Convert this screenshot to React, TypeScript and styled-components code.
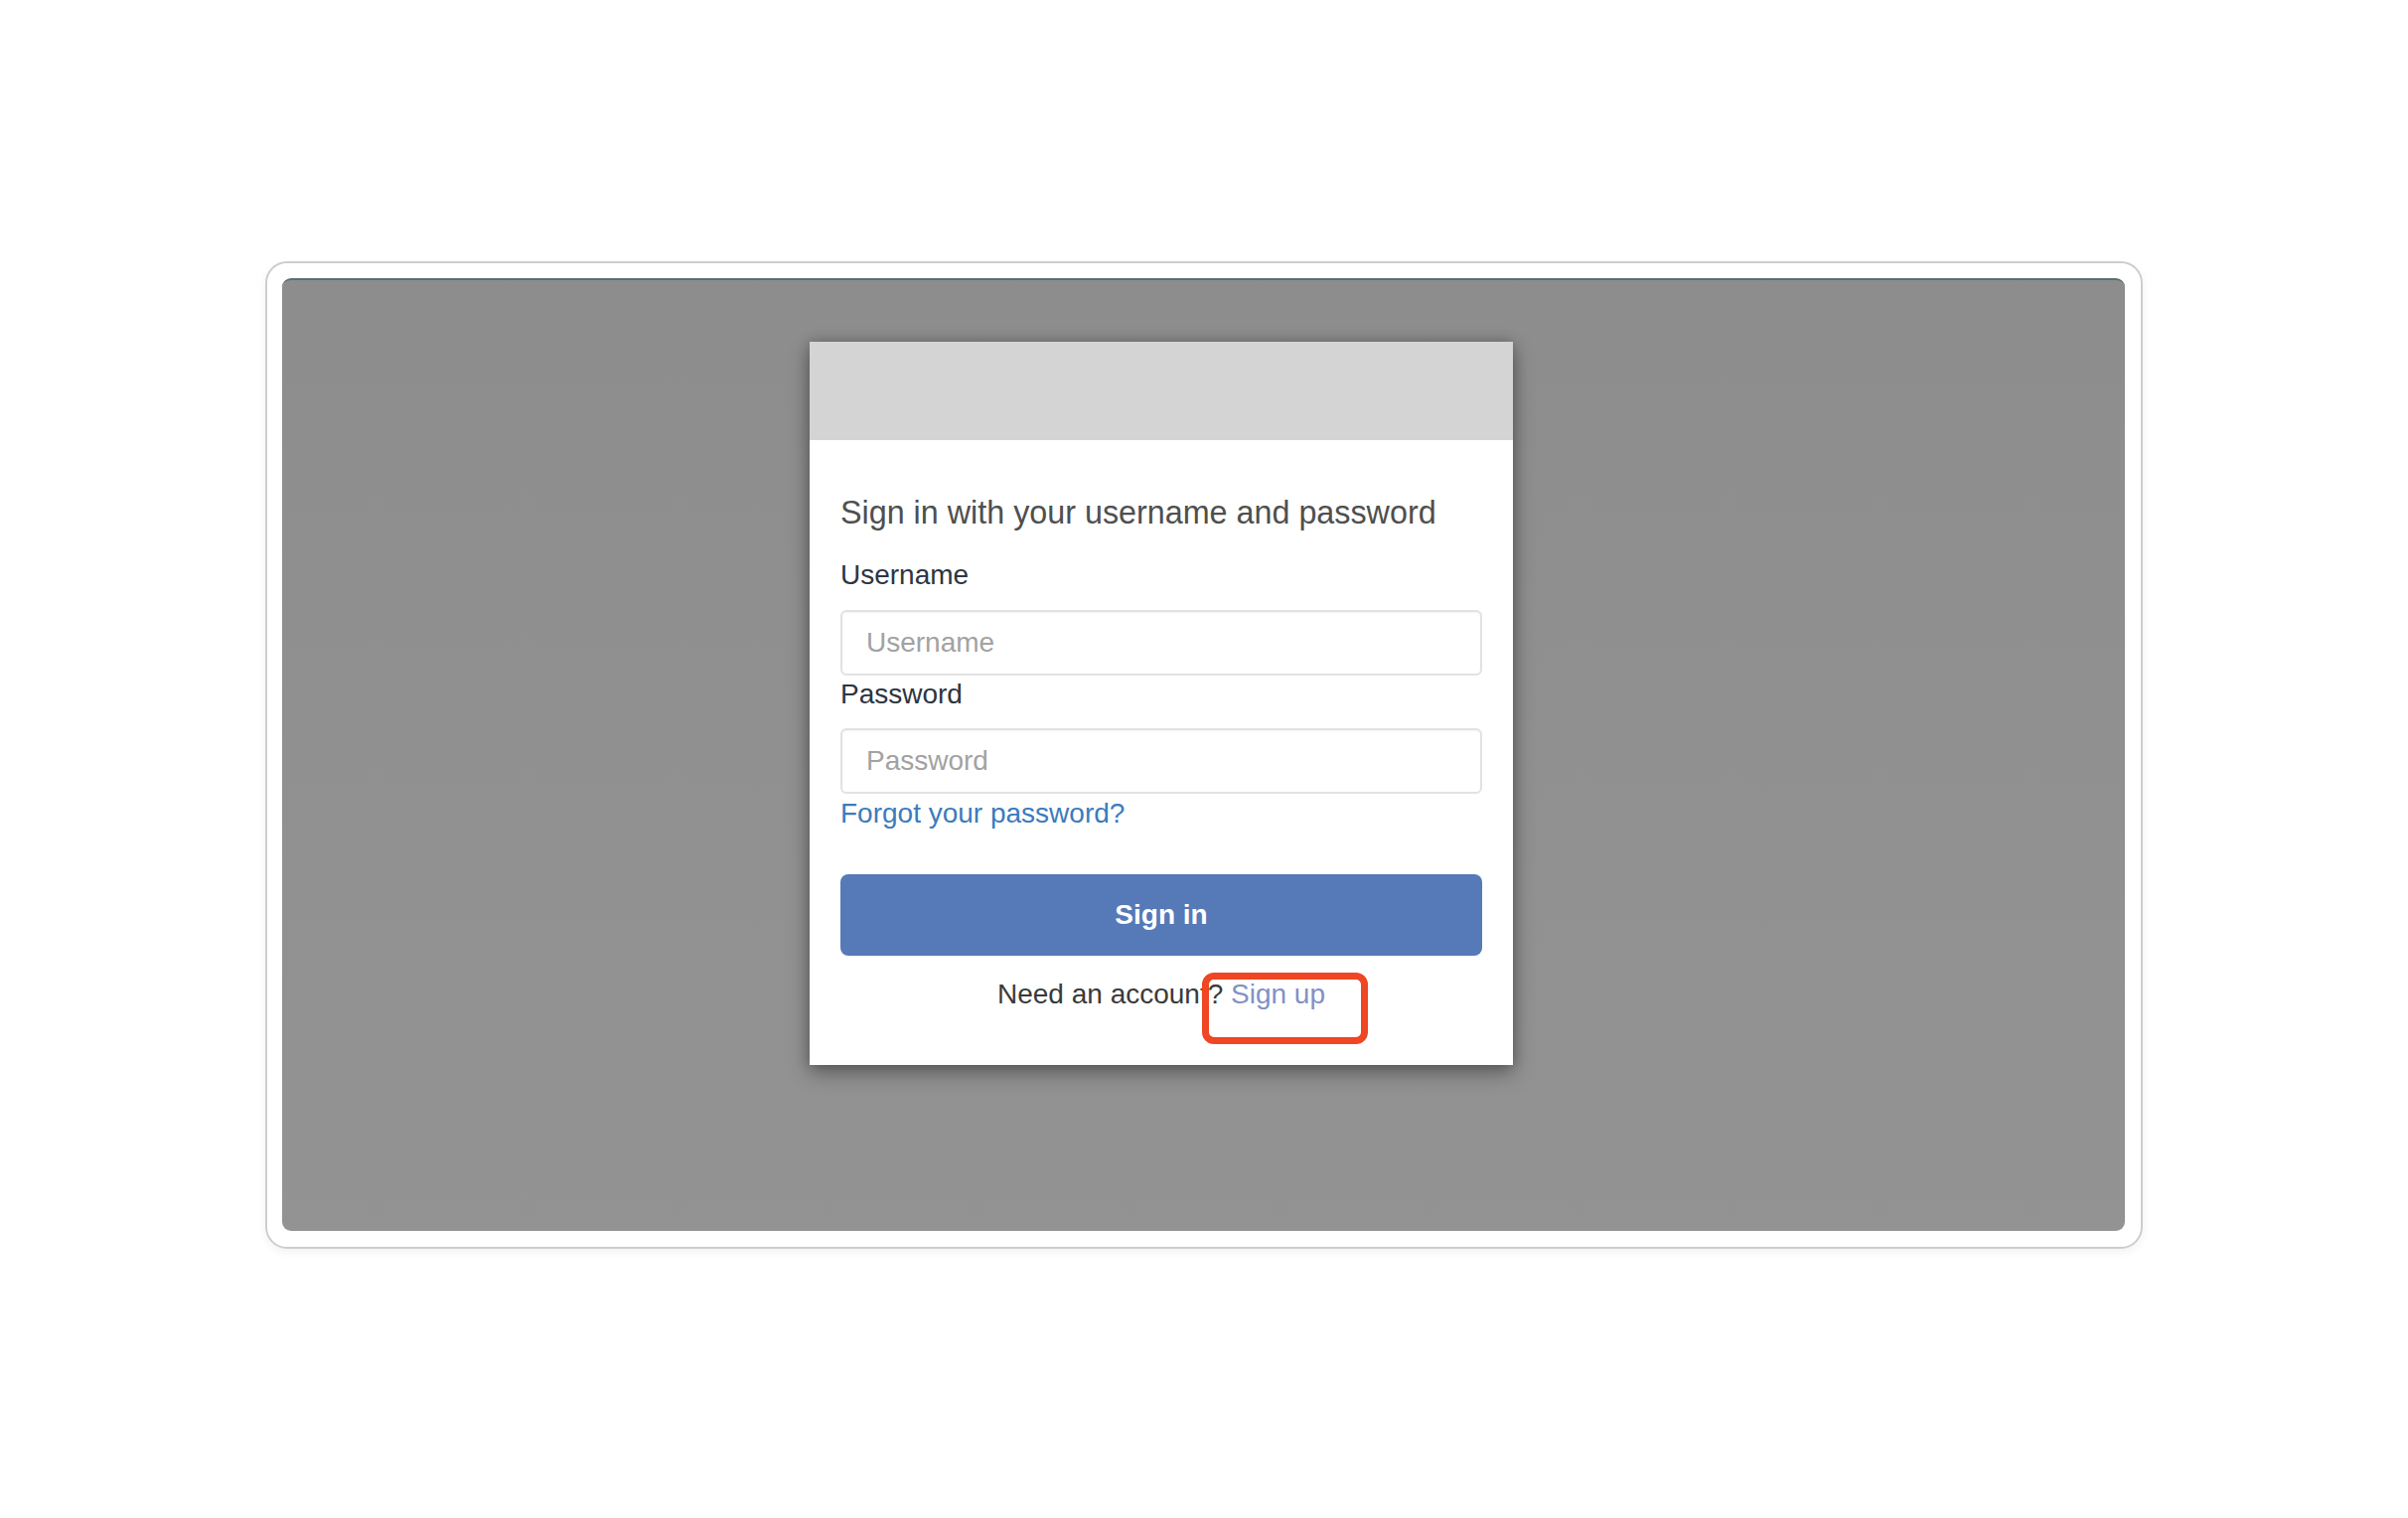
import React from "react";
import styled, { createGlobalStyle } from "styled-components";

const Global = createGlobalStyle`
  html, body {
    margin: 0;
    padding: 0;
    background: #ffffff;
    font-family: "Liberation Sans", Arial, Helvetica, sans-serif;
  }
  * { box-sizing: border-box; }
`;

const Page = styled.div`
  width: 2424px;
  min-height: 1528px;
  padding: 263px 267px 0 267px;
  background: #ffffff;
`;

const Frame = styled.div`
  width: 1890px;
  height: 994px;
  border: 2px solid #cdcdcd;
  border-radius: 22px;
  padding: 15px 16px 16px 15px;
  background: #ffffff;
  box-shadow: 0 3px 8px rgba(0, 0, 0, 0.06);
`;

const Screen = styled.div`
  width: 100%;
  height: 100%;
  border-radius: 9px;
  border-top: 2px solid #56706f;
  background: linear-gradient(#8d8d8d, #939393);
  padding: 62px 0 0 531px;
  overflow: hidden;
`;

const Card = styled.div`
  width: 708px;
  background: #ffffff;
  box-shadow: 0 8px 20px rgba(0, 0, 0, 0.34), 0 0 12px rgba(0, 0, 0, 0.22);
`;

const CardHeader = styled.div`
  height: 99px;
  background: #d4d4d4;
`;

const CardBody = styled.div`
  padding: 53px 31px 53px 31px;
  display: flex;
  flex-direction: column;
`;

const Heading = styled.div`
  font-size: 32.3px;
  line-height: 40px;
  color: #4f4f4f;
  margin-bottom: 25px;
`;

const Label = styled.label<{ $gap: number }>`
  display: block;
  font-size: 28px;
  line-height: 36px;
  color: #2e3540;
  margin-bottom: ${(p) => p.$gap}px;
`;

const Input = styled.input`
  display: block;
  width: 100%;
  height: 66px;
  border: 2px solid #e2e2e2;
  border-radius: 6px;
  padding: 0 0 0 24px;
  font-family: "Liberation Sans", Arial, Helvetica, sans-serif;
  font-size: 28px;
  color: #333;
  background: #fff;
  box-shadow: inset 0 1px 2px rgba(0, 0, 0, 0.05);
  outline: none;
  &::placeholder {
    color: #a2a2a2;
  }
`;

const Spacer = styled.div<{ $h: number }>`
  height: ${(p) => p.$h}px;
`;

const Link = styled.a<{ $color: string }>`
  color: ${(p) => p.$color};
  text-decoration: none;
  cursor: pointer;
`;

const Forgot = styled.div`
  font-size: 28px;
  line-height: 36px;
  margin-bottom: 43px;
`;

const Button = styled.button`
  width: 100%;
  height: 82px;
  border: none;
  border-radius: 8px;
  background: #5679b7;
  color: #ffffff;
  font-family: "Liberation Sans", Arial, Helvetica, sans-serif;
  font-size: 28px;
  font-weight: 700;
  margin-bottom: 21px;
  cursor: pointer;
`;

const Footer = styled.div`
  position: relative;
  font-size: 28px;
  line-height: 36px;
  color: #3a3a3a;
  text-align: center;
`;

const Highlight = styled.div`
  position: absolute;
  left: 364px;
  top: -4px;
  width: 167px;
  height: 72px;
  border: 7px solid #ef4623;
  border-radius: 12px;
  pointer-events: none;
`;

export default function App() {
  return (
    <>
      <Global />
      <Page>
        <Frame>
          <Screen>
            <Card>
              <CardHeader />
              <CardBody>
                <Heading>Sign in with your username and password</Heading>
                <Label $gap={17}>Username</Label>
                <Input placeholder="Username" />
                <Spacer $h={1} />
                <Label $gap={16}>Password</Label>
                <Input type="password" placeholder="Password" />
                <Spacer $h={2} />
                <Forgot>
                  <Link $color="#3b7bbd">Forgot your password?</Link>
                </Forgot>
                <Button>Sign in</Button>
                <Footer>
                  Need an account? <Link $color="#8290c6">Sign up</Link>
                  <Highlight />
                </Footer>
              </CardBody>
            </Card>
          </Screen>
        </Frame>
      </Page>
    </>
  );
}
